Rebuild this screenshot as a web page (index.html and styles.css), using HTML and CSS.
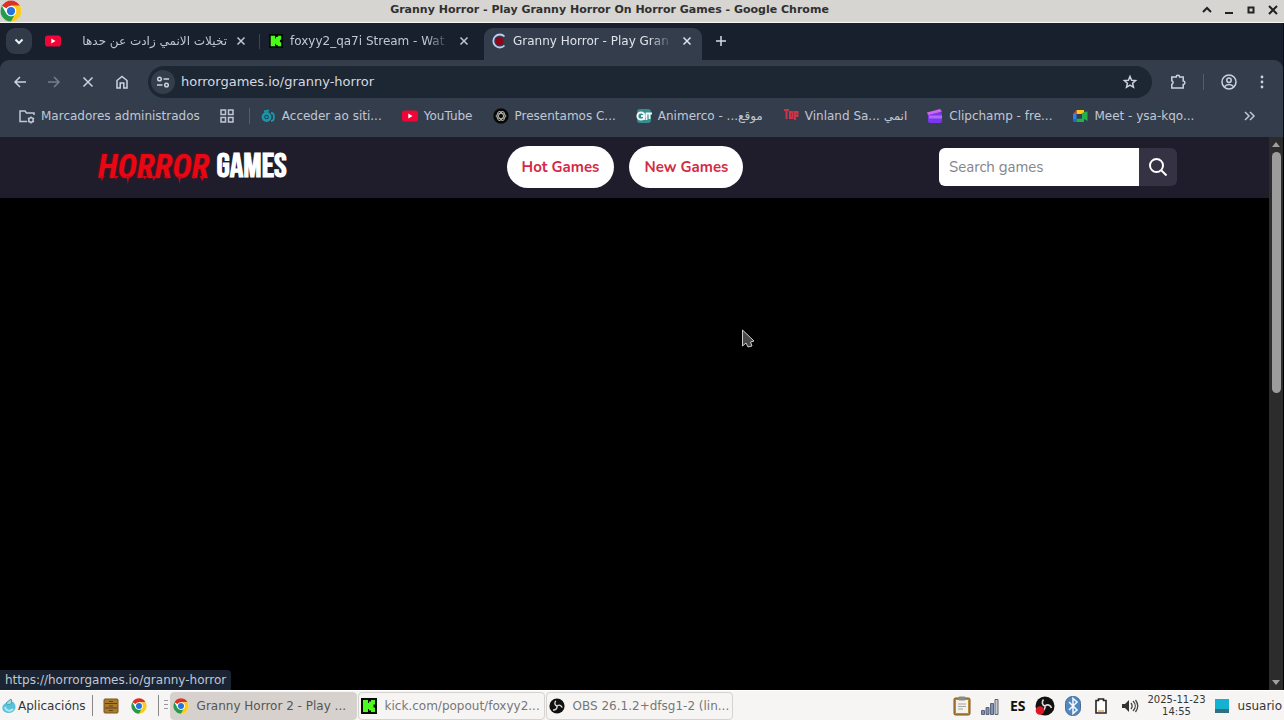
FILE: index.html
```html
<!DOCTYPE html>
<html lang="gl">
<head>
    <meta charset="UTF-8">
    <meta name="viewport" content="width=device-width, initial-scale=1.0">
    <title>Granny Horror - Play Granny Horror On Horror Games</title>
    <link rel="stylesheet" href="styles.css">
</head>
<body>
    <svg class="sprite" aria-hidden="true">
        <symbol id="chrome" viewBox="0 0 48 48">
            <circle cx="24" cy="24" r="23" fill="#fff"/>
            <path d="M24 24 4.100 12.500A23 23 0 0 1 43.900 12.500H24z" fill="#dc3226"/>
            <path d="M24 24 43.900 12.500A23 23 0 0 1 24 47l-2-4z" fill="#fbcb1f"/>
            <path d="M24 47A23 23 0 0 1 4.100 12.500L14 29.800l10 5.700 7-1.500z" fill="#279a4b"/>
            <path d="M24 12.500h20l-10 17z" fill="#fbcb1f"/>
            <circle cx="24" cy="24" r="11.500" fill="#fff"/>
            <circle cx="24" cy="24" r="9" fill="#2374dd"/>
        </symbol>
        <symbol id="youtube" viewBox="0 0 16 16">
            <rect y="2.500" width="16" height="11" rx="2.800" fill="#f00538"/>
            <path d="M6.300 5.500v5l4.200-2.500z" fill="#fff"/>
        </symbol>
        <symbol id="kick" viewBox="0 0 16 16">
            <rect width="16" height="16" fill="#030b02"/>
            <path d="M2 2h5v3h1V3.500h2V2h4v4.500h-1.500v3H14V14h-4v-1.500H8V11H7v3H2z" fill="#4dfa1e"/>
        </symbol>
        <symbol id="close" viewBox="0 0 16 16">
            <path d="M4.500 4.500l7 7M11.500 4.500l-7 7" fill="none" stroke="currentColor" stroke-width="1.500"/>
        </symbol>
        <symbol id="obs" viewBox="0 0 20 20">
            <circle cx="10" cy="10" r="9.500" fill="#101010"/>
            <g fill="none" stroke="#d8d8d8" stroke-width="1.700">
                <path d="M10 10c-3-1-3.500-4-1.500-6.500"/>
                <path d="M10 10c2.500-2 5.500-1 6.500 2"/>
                <path d="M10 10c.500 3-1.500 5.300-5 5"/>
            </g>
        </symbol>
    </svg>

    <header class="titlebar">
        <svg class="titlebar-logo"><use href="#chrome"/></svg>
        <h1>Granny Horror - Play Granny Horror On Horror Games - Google Chrome</h1>
        <div class="window-buttons">
            <button type="button" aria-label="Shade"><svg viewBox="0 0 12 12"><path d="M2 8l4-4 4 4"/></svg></button>
            <button type="button" aria-label="Minimize"><svg viewBox="0 0 12 12"><path d="M2 9h8"/></svg></button>
            <button type="button" aria-label="Maximize"><svg viewBox="0 0 12 12"><path d="M3.500 3.500h5v5h-5z"/></svg></button>
            <button type="button" aria-label="Close"><svg viewBox="0 0 12 12"><path d="M2 2l8 8M10 2l-8 8"/></svg></button>
        </div>
    </header>

    <div class="browser">
        <div class="tabs">
            <button type="button" class="tab-search" aria-label="Search tabs"><svg viewBox="0 0 16 16"><path d="M4.500 6.500L8 10l3.500-3.500"/></svg></button>
            <div class="tab">
                <svg class="icon"><use href="#youtube"/></svg>
                <span class="tab-title rtl" dir="rtl">تخيلات الانمي زادت عن حدها</span>
                <button type="button" aria-label="Close tab"><svg class="icon"><use href="#close"/></svg></button>
            </div>
            <div class="tab">
                <svg class="icon small"><use href="#kick"/></svg>
                <span class="tab-title">foxyy2_qa7i Stream - Wat</span>
                <button type="button" aria-label="Close tab"><svg class="icon"><use href="#close"/></svg></button>
            </div>
            <div class="tab active">
                <svg class="icon" viewBox="0 0 16 16"><circle cx="8.500" cy="8" r="4" fill="#8d0716"/><path d="M13.500 3.500A6.500 6.500 0 1 0 13.500 12.500" fill="none" stroke="#b9cdf5" stroke-width="1.800"/></svg>
                <span class="tab-title">Granny Horror - Play Gran</span>
                <button type="button" aria-label="Close tab"><svg class="icon"><use href="#close"/></svg></button>
            </div>
            <button type="button" class="new-tab" aria-label="New tab"><svg class="line-icon" viewBox="0 0 16 16"><path d="M8 3v10M3 8h10"/></svg></button>
        </div>

        <div class="toolbar">
            <button type="button" aria-label="Back"><svg class="line-icon" viewBox="0 0 16 16"><path d="M14 8H3M8 3L3 8l5 5"/></svg></button>
            <button type="button" aria-label="Forward" disabled><svg class="line-icon" viewBox="0 0 16 16"><path d="M2 8h11M8 3l5 5-5 5"/></svg></button>
            <button type="button" aria-label="Stop"><svg class="line-icon" viewBox="0 0 16 16"><path d="M3.500 3.500l9 9M12.500 3.500l-9 9"/></svg></button>
            <button type="button" aria-label="Home"><svg class="line-icon" viewBox="0 0 16 16"><path d="M3 14V6.500L8 2.500l5 4V14H9.800V9H6.200v5z"/></svg></button>
            <div class="address">
                <button type="button" class="site-info" aria-label="Site information"><svg class="line-icon" viewBox="0 0 16 16"><circle cx="4.500" cy="5" r="1.800"/><path d="M8.500 5H14M2 11h5.500"/><circle cx="11.500" cy="11" r="1.800"/></svg></button>
                <input type="text" aria-label="Address" value="horrorgames.io/granny-horror">
                <button type="button" aria-label="Bookmark this page"><svg class="line-icon" viewBox="0 0 16 16"><path d="M8 2.500l1.600 3.700 4 .4-3 2.700.9 4L8 11.200l-3.500 2.100.9-4-3-2.700 4-.4z"/></svg></button>
            </div>
            <div class="toolbar-end">
                <button type="button" aria-label="Extensions"><svg class="line-icon" viewBox="0 0 16 16"><path d="M1.800 3h4.400a1.700 1.700 0 0 1 3.400 0h3.600v4a1.700 1.700 0 0 1 0 3.400V14H1.800v-3.700a1.900 1.900 0 0 0 0-3.600z"/></svg></button>
                <span class="divider"></span>
                <button type="button" aria-label="Profile"><svg class="line-icon" viewBox="0 0 16 16"><circle cx="8" cy="8" r="7"/><circle cx="8" cy="6.200" r="2.200"/><path d="M3.300 12.800c2.500-3 6.900-3 9.400 0"/></svg></button>
                <button type="button" aria-label="Menu"><svg class="icon" viewBox="0 0 16 16" fill="currentColor"><circle cx="8" cy="3" r="1.400"/><circle cx="8" cy="8" r="1.400"/><circle cx="8" cy="13" r="1.400"/></svg></button>
            </div>
        </div>

        <nav class="bookmarks" aria-label="Bookmarks">
            <a href="#" class="managed"><svg class="line-icon" viewBox="0 0 16 16"><path d="M8 13.500H1V3h5l1.500 2H15v2"/><circle cx="12" cy="12" r="2.200"/><path d="M12 8.500v1.300M12 14.200v1.300M9 10.200l1 .7M14 13.100l1 .7M15 10.200l-1 .7M10 13.100l-1 .7"/></svg>Marcadores administrados</a>
            <a href="#" aria-label="Apps"><svg class="line-icon" viewBox="0 0 16 16"><path d="M1 2h4.500v4.500h-4.500zM8.500 2h4.500v4.500h-4.500zM1 9.500h4.500V14h-4.500zM8.500 9.500h4.500V14h-4.500z"/></svg></a>
            <span class="divider"></span>
            <a href="#"><svg class="icon" viewBox="0 0 16 16"><circle cx="6.500" cy="9" r="3.600" fill="none" stroke="#1996a8" stroke-width="2.600"/><circle cx="6.500" cy="9" r="1.200" fill="#1996a8"/><path d="M11 5c4 0 4 8 0 8M4 3.500l5-1" fill="none" stroke="#1996a8" stroke-width="1.800"/></svg>Acceder ao siti...</a>
            <a href="#"><svg class="icon"><use href="#youtube"/></svg>YouTube</a>
            <a href="#"><svg class="icon" viewBox="0 0 16 16"><circle cx="8" cy="8" r="7.700" fill="#090909"/><g fill="none" stroke="#b5b5af" stroke-width=".900"><ellipse cx="8" cy="8" rx="4.800" ry="2.500"/><ellipse cx="8" cy="8" rx="4.800" ry="2.500" transform="rotate(60 8 8)"/><ellipse cx="8" cy="8" rx="4.800" ry="2.500" transform="rotate(120 8 8)"/></g></svg>Presentamos C...</a>
            <a href="#"><svg class="icon" viewBox="0 0 16 16"><rect x="1" y="1" width="14" height="14" rx="3" fill="#358f8c"/><circle cx="5" cy="8" r="3.600" fill="none" stroke="#f4f7fa" stroke-width="2"/><path d="M5 8h3v4M10.500 12V5.500H16M13.500 6v5" fill="none" stroke="#f4f7fa" stroke-width="1.800"/></svg>Animerco - ...موقع</a>
            <a href="#"><svg class="icon" viewBox="0 0 16 16" fill="none" stroke="#c93649" stroke-width="2"><path d="M1 2h5M3.500 2v9M7 4h2.500v6H7zM12 3v9M12 4h2.500v4H12"/></svg>Vinland Sa... انمي</a>
            <a href="#"><svg class="icon" viewBox="0 0 16 16"><rect x="1" y="4" width="14" height="11" rx="2" fill="#7938ed"/><path d="M0 4.500L13 1l2 2.500L1 7z" fill="#cf66ed"/><path d="M2 7.500h13v3H2z" fill="#af68fa"/></svg>Clipchamp - fre...</a>
            <a href="#"><svg class="icon" viewBox="0 0 16 16"><path d="M4.500 2H12v4H4.500z" fill="#f8ca19"/><path d="M4.500 2L1 6h3.500z" fill="#e74335"/><path d="M1 6h3.500v5H1z" fill="#2a83ef"/><path d="M1 11h3.500v3H2.500Q1 14 1 12.500z" fill="#2468d8"/><path d="M4.500 10.500H9V6l3-2 3.500-.500v9.500L12 11v3H4.500z" fill="#22b04f"/><path d="M5 6h5v4.500H5z" fill="#343d4c"/></svg>Meet - ysa-kqo...</a>
            <button type="button" aria-label="More bookmarks"><svg class="line-icon" viewBox="0 0 16 16"><path d="M4 4l4 4-4 4M9 4l4 4-4 4"/></svg></button>
        </nav>
    </div>

    <div class="viewport">
        <main class="page">
            <div class="site-header">
                <a href="#" class="logo">
                    <span class="logo-red">HORROR
                        <svg class="drips" viewBox="0 0 112 12" preserveAspectRatio="none"><path d="M2 0h5l-2 3-1 5-1-5zM16 0h5l-3 5zM27 0h6l-2 4-1 8-1-8zM44 0h6l-3 5zM54 0h4l-2 8zM66 0h5l-2 4zM80 0h5l-2 4-1 8-1-8zM94 0h4l-2 5zM102 0h5l-2 8z"/></svg>
                    </span>
                    <span class="logo-white">GAMES</span>
                </a>
                <nav class="site-nav">
                    <a href="#">Hot Games</a>
                    <a href="#">New Games</a>
                </nav>
                <form class="search">
                    <input type="text" placeholder="Search games" aria-label="Search games">
                    <button type="button" aria-label="Search"><svg viewBox="0 0 20 20"><circle cx="8.500" cy="8.500" r="6.500"/><path d="M13.500 13.500l5 5"/></svg></button>
                </form>
            </div>
        </main>
        <div class="scrollbar">
            <span class="arrow up"></span>
            <span class="track"><span class="thumb"></span></span>
            <span class="arrow down"></span>
        </div>
        <div class="status">https://horrorgames.io/granny-horror</div>
    </div>

    <footer class="taskbar">
        <button type="button" class="apps"><svg class="icon" viewBox="0 0 16 16"><path d="M9 3c8 1 7 12-1 12S-1 6 6 5z" fill="#55c3dc"/><path d="M5 5l5-4 1 4c-2 2-5 2-6 0z" fill="#aad7e2" stroke="#3b9eb5"/><path d="M4 9c1 4 5 5 8 2" fill="none" stroke="#b5e6f2" stroke-width="2"/></svg>Aplicacións</button>
        <span class="rule"></span>
        <div class="launchers">
            <button type="button" aria-label="Files"><svg class="icon" viewBox="0 0 16 16"><rect x="1" y="1" width="14" height="14" rx="1" fill="#ab7b27" stroke="#745422"/><path d="M2 5.500h12M2 10h12M6 3.500h4M6 8h4M6 12.500h4" stroke="#5d431b" stroke-width="1.200"/></svg></button>
            <button type="button" aria-label="Google Chrome"><svg class="icon"><use href="#chrome"/></svg></button>
        </div>
        <span class="rule"></span>
        <span class="grip"></span>
        <div class="tasks">
            <button type="button" class="task current"><svg class="icon"><use href="#chrome"/></svg><span>Granny Horror 2 - Play ...</span></button>
            <button type="button" class="task"><svg class="icon"><use href="#kick"/></svg><span>kick.com/popout/foxyy2...</span></button>
            <button type="button" class="task"><svg class="icon"><use href="#obs"/></svg><span>OBS 26.1.2+dfsg1-2 (lin...</span></button>
        </div>
        <div class="tray">
            <svg class="tray-icon" viewBox="0 0 20 20"><rect x="2" y="2" width="16" height="17" rx="1.500" fill="#b98a35" stroke="#735522"/><path d="M4 4h12v13H4z" fill="#f4f2ec"/><rect x="6.500" y=".500" width="7" height="4" rx="1" fill="#8b8b86"/><path d="M6 8h8M6 10.500h8M6 13h5" stroke="#a2a29d"/></svg>
            <svg class="tray-icon" viewBox="0 0 20 20" stroke="#5d6577" fill="#7c91bb"><path d="M1.500 14.500h3v4h-3zM6 11.500h3v7H6zM10.500 7.500h3v11h-3z"/><path d="M15 3.500h3v15h-3z" fill="#c8c9cb"/></svg>
            <span class="lang">ES</span>
            <svg class="tray-icon" viewBox="0 0 20 20"><use href="#obs"/><circle cx="5" cy="14.500" r="4.300" fill="#df1724"/></svg>
            <svg class="tray-icon" viewBox="0 0 20 20"><rect x="2.500" y=".500" width="15" height="19" rx="7" fill="#5587bf" stroke="#416b9c"/><path d="M6 6l8 8-4 3.500v-15L14 6l-8 8" fill="none" stroke="#f5f9ff" stroke-width="1.500"/></svg>
            <svg class="tray-icon" viewBox="0 0 20 20"><path d="M5 4.500h2.500V3h5v1.500H15v12.500H5z" fill="#fff" stroke="#242424" stroke-width="1.600"/><path d="M7 15h6" stroke="#dfa661" stroke-width="1.500"/></svg>
            <svg class="tray-icon" viewBox="0 0 20 20"><path d="M3 8h3l4-4v12l-4-4H3z" fill="#333"/><path d="M12 7c1.500 2 1.500 4 0 6M14 5c3 3 3 7 0 10M16.500 4c3 4 3 8 0 12" fill="none" stroke="#444" stroke-width="1.300"/></svg>
            <time class="clock" datetime="2025-11-23T14:55">2025-11-23<br>14:55</time>
            <svg class="icon" viewBox="0 0 16 16"><path d="M1 1h14v14H1z" fill="#14b1d1"/><path d="M1 11h14v4H1z" fill="#356f7b"/></svg>
            <span class="user">usuario</span>
        </div>
    </footer>

    <svg class="pointer" viewBox="0 0 14 20"><path d="M1.500 1.500v16l3.500-3 2 4 4-1-1.500-4 3.500-1z"/></svg>
</body>
</html>
```
FILE: styles.css
```css
* {
    box-sizing: border-box;
}
body {
    margin: 0;
    height: 100vh;
    display: flex;
    flex-direction: column;
    overflow: hidden;
    background: #000;
    color: #c0c7d4;
    font-family: "DejaVu Sans", sans-serif;
    font-size: 12px;
}
button {
    display: flex;
    align-items: center;
    justify-content: center;
    padding: 0;
    border: 0;
    background: none;
    color: inherit;
    font: inherit;
}
input {
    min-width: 0;
    border: 0;
    outline: 0;
    font: inherit;
}
a {
    color: inherit;
    text-decoration: none;
}
svg {
    display: block;
    flex: none;
}
.sprite {
    position: absolute;
    width: 0;
    height: 0;
}
.icon, .line-icon {
    width: 16px;
    height: 16px;
}
.icon.small {
    width: 14px;
    height: 14px;
    margin: 0 1px;
}
.line-icon {
    fill: none;
    stroke: currentColor;
    stroke-width: 1.5;
}
.divider {
    width: 1px;
    height: 16px;
    background: #525c6d;
}

/* window title */
.titlebar {
    display: flex;
    align-items: center;
    height: 23px;
    flex: none;
    background: #d6d5d1;
    border-bottom: 1px solid #f4f4f2;
    color: #303030;
}
.titlebar-logo {
    width: 22px;
    height: 22px;
}
.titlebar h1 {
    flex: 1;
    margin: 0;
    padding: 0 12px 2px 8px;
    font-size: 11px;
    line-height: 20px;
    text-align: center;
    white-space: nowrap;
}
.window-buttons {
    display: flex;
    gap: 10px;
    padding: 0 5px 2px 0;
}
.window-buttons svg {
    width: 12px;
    height: 12px;
    fill: none;
    stroke: #222;
    stroke-width: 2;
}

/* browser chrome */
.browser {
    flex: none;
    background: #18202e;
    border-right: 1px solid #090c12;
}
.tabs {
    display: flex;
    height: 37px;
    padding: 5px 0 0 6px;
}
.tab-search {
    width: 26px;
    height: 26px;
    margin-right: 4px;
    border-radius: 9px;
    background: #303a48;
}
.tab-search svg {
    width: 16px;
    fill: none;
    stroke: #eef1f5;
    stroke-width: 2;
}
.tab {
    display: flex;
    align-items: center;
    flex: 0 1 223px;
    min-width: 0;
    height: 32px;
    padding: 0 10px 6px 9px;
    position: relative;
}
.tab + .tab::before {
    content: "";
    position: absolute;
    left: 0;
    top: 6px;
    width: 1px;
    height: 15px;
    background: #3b4453;
}
.tab.active {
    margin-left: 2px;
    flex-basis: 218px;
    padding: 0 7px 6px;
    border-radius: 9px 9px 0 0;
    background: #343d4c;
    color: #dfe3ea;
}
.tab.active::before {
    display: none;
}
.tab-title {
    flex: 1;
    min-width: 0;
    margin: 0 6px;
    overflow: hidden;
    white-space: nowrap;
    line-height: 20px;
    mask-image: linear-gradient(to right, #000 85%, transparent);
}
.tab-title.rtl {
    mask-image: linear-gradient(to left, #000 92%, transparent);
}
.new-tab {
    width: 28px;
    height: 26px;
    margin-left: 5px;
    color: #d5dae2;
}
.toolbar {
    display: flex;
    align-items: center;
    height: 43px;
    padding: 0 13px 0 12px;
    gap: 18px;
    border-radius: 9px 9px 0 0;
    background: #343d4c;
    color: #ccd3df;
}
.toolbar button:disabled {
    color: #747e8f;
}
.address {
    display: flex;
    align-items: center;
    flex: 1;
    height: 32px;
    padding: 0 14px 0 3px;
    border-radius: 16px;
    background: #1d2633;
}
.address input {
    flex: 1;
    padding: 0 6px;
    background: none;
    color: #d4d9e2;
    font-size: 13px;
}
.site-info {
    width: 24px;
    height: 24px;
    border-radius: 12px;
    background: #343d4c;
}
.toolbar-end {
    display: flex;
    align-items: center;
    gap: 17px;
}
.bookmarks {
    display: flex;
    align-items: center;
    gap: 20px;
    height: 34px;
    padding: 0 26px 8px 19px;
    background: #343d4c;
    white-space: nowrap;
}
.bookmarks a {
    display: flex;
    align-items: center;
    gap: 6px;
}
.bookmarks .divider {
    margin: 0 -10px 0 -7px;
}
.bookmarks button {
    margin-left: auto;
}

/* web page */
.viewport {
    position: relative;
    display: flex;
    flex: 1;
    min-height: 0;
    border-right: 1px solid #000;
}
.page {
    flex: 1;
}
.site-header {
    display: grid;
    grid-template-columns: 1fr auto 1fr;
    align-items: center;
    height: 61px;
    padding: 0 92px 2px 73px;
    background: #1f1d2c;
    font-family: Nunito, "Open Sans", sans-serif;
    font-size: 15px;
}
.logo {
    display: flex;
    align-items: center;
    gap: 7px;
    padding-left: 25px;
    line-height: 32px;
}
.logo-red {
    position: relative;
    color: #e80713;
    font-family: "Liberation Sans Narrow", "Roboto Condensed", sans-serif;
    font-size: 33px;
    font-style: italic;
    font-weight: bold;
    text-shadow: 0 0 2px #b5000c;
}
.drips {
    position: absolute;
    left: 0;
    bottom: -1px;
    width: 100%;
    height: 8px;
    fill: #cb0713;
}
.logo-white {
    color: #fff;
    font-family: "Bebas Neue", "Liberation Sans Narrow", sans-serif;
    font-size: 34px;
    font-weight: bold;
}
.site-nav {
    display: flex;
    gap: 15px;
}
.site-nav a {
    padding: 0 15px;
    border-radius: 21px;
    background: #fff;
    color: #d42a46;
    font-weight: bold;
    line-height: 42px;
}
.search {
    display: flex;
    justify-self: end;
    height: 38px;
    border-radius: 6px;
    overflow: hidden;
}
.search input {
    width: 200px;
    padding: 0 10px;
    background: #fff;
}
.search input::placeholder {
    color: #85858a;
}
.search button {
    width: 38px;
    background: #353244;
}
.search svg {
    width: 20px;
    height: 20px;
    fill: none;
    stroke: #fff;
    stroke-width: 2;
}
.scrollbar {
    display: flex;
    flex-direction: column;
    align-items: center;
    width: 14px;
    padding: 5px 0;
    background: #2c2c2c;
}
.arrow {
    border: 4px solid transparent;
}
.arrow.up {
    border-top: 0;
    border-bottom: 5px solid #a0a0a0;
}
.arrow.down {
    border-bottom: 0;
    border-top: 5px solid #a0a0a0;
}
.track {
    flex: 1;
    width: 9px;
    padding: 5px 0;
}
.thumb {
    display: block;
    height: 46%;
    border-radius: 5px;
    background: #9c9c9c;
}
.status {
    position: absolute;
    left: 0;
    bottom: 0;
    padding: 0 5px;
    border-radius: 0 4px 0 0;
    background: #1b2432;
    line-height: 20px;
}

/* desktop panel */
.taskbar {
    display: flex;
    align-items: center;
    flex: none;
    height: 30px;
    padding-left: 1px;
    border-top: 1px solid #fff;
    background: #f6f5f4;
    color: #353535;
}
.apps {
    gap: 1px;
}
.rule {
    width: 1px;
    height: 21px;
    margin: 0 5px 0 6px;
    background: #888;
}
.launchers {
    display: flex;
    gap: 12px;
    padding: 0 5px;
}
.grip {
    width: 4px;
    height: 11px;
    margin-right: 2px;
    background: repeating-linear-gradient(#999 0 1px, transparent 1px 4px);
}
.tasks {
    display: flex;
    gap: 1px;
}
.task {
    justify-content: flex-start;
    gap: 8px;
    width: 187px;
    height: 28px;
    padding: 0 2px;
    border: 1px solid #d5d2cf;
    border-radius: 4px;
    color: #777;
    white-space: nowrap;
}
.task.current {
    background: #d6d1cd;
    color: #555;
}
.tray {
    display: flex;
    align-items: center;
    gap: 8px;
    margin-left: auto;
    padding-right: 2px;
}
.tray-icon {
    width: 20px;
    height: 20px;
}
.lang {
    padding: 0 2px;
    font-family: "Noto Sans", sans-serif;
    font-size: 14px;
    font-weight: bold;
    color: #111;
}
.clock {
    font-size: 10px;
    line-height: 12px;
    text-align: center;
}

.pointer {
    position: absolute;
    left: 741px;
    top: 328px;
    width: 14px;
    height: 21px;
    fill: #484848;
    stroke: #cfcfcf;
}
```
